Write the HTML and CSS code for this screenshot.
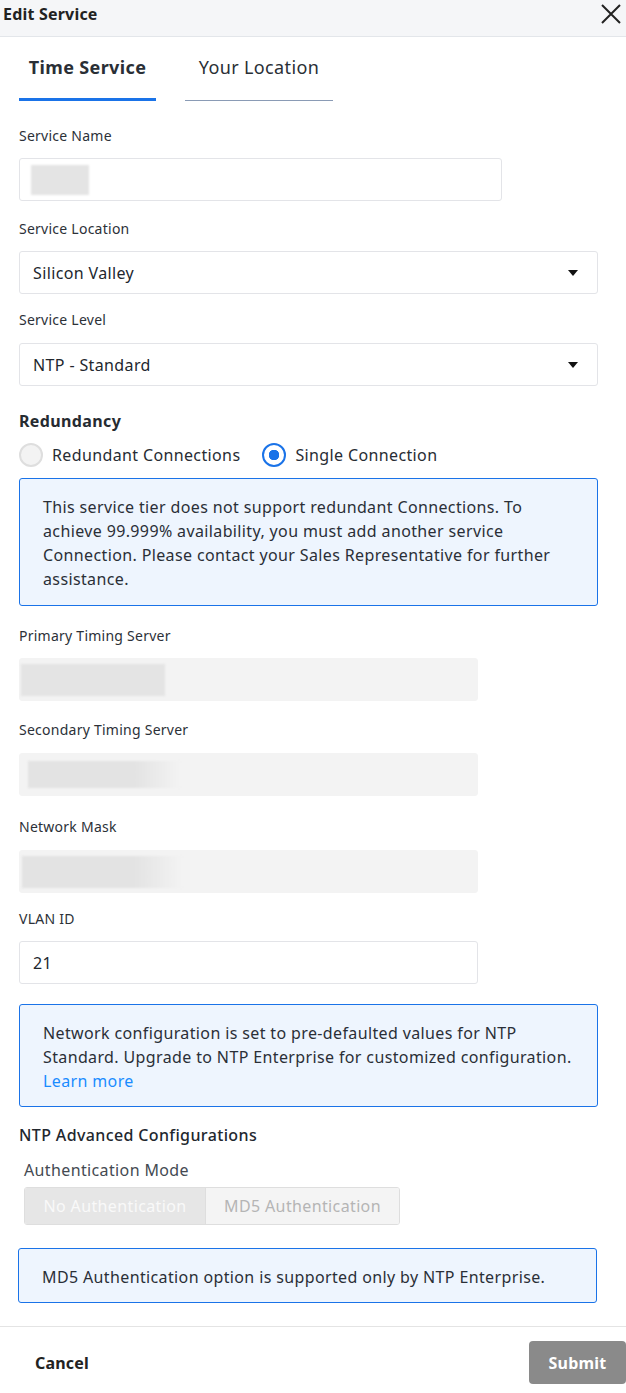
FILE: index.html
```html
<!DOCTYPE html>
<html>
<head>
<meta charset="utf-8">
<link rel="stylesheet" href="styles.css">
</head>
<body>
<div class="modal">
  <header class="modal-header">
    <h1 class="modal-title">Edit Service</h1>
    <button class="close-btn" aria-label="Close">
      <svg width="22" height="22" viewBox="0 0 22 22"><path d="M2 2 L20 20 M20 2 L2 20" stroke="#222" stroke-width="2" fill="none"/></svg>
    </button>
  </header>
  <div class="modal-body">
    <nav class="tabs">
      <div class="tab active">Time Service</div>
      <div class="tab">Your Location</div>
    </nav>

    <div class="field">
      <label class="label">Service Name</label>
      <div class="input w-medium"><span class="blur blur-name"></span></div>
    </div>

    <div class="field">
      <label class="label">Service Location</label>
      <div class="input select"><span>Silicon Valley</span><span class="caret"></span></div>
    </div>

    <div class="field f-level">
      <label class="label">Service Level</label>
      <div class="input select"><span>NTP - Standard</span><span class="caret"></span></div>
    </div>

    <div class="section">
      <h2 class="section-title">Redundancy</h2>
      <div class="radios">
        <div class="radio"><span class="radio-dot"></span>Redundant Connections</div>
        <div class="radio checked"><span class="radio-dot"></span>Single Connection</div>
      </div>
      <div class="info info-1">This service tier does not support redundant Connections. To achieve 99.999% availability, you must add another service Connection. Please contact your Sales Representative for further assistance.</div>
    </div>

    <div class="field f-primary">
      <label class="label">Primary Timing Server</label>
      <div class="input disabled w-small"><span class="blur blur-a"></span></div>
    </div>
    <div class="field f-secondary">
      <label class="label">Secondary Timing Server</label>
      <div class="input disabled w-small"><span class="blur blur-b"></span></div>
    </div>
    <div class="field f-mask">
      <label class="label">Network Mask</label>
      <div class="input disabled w-small"><span class="blur blur-c"></span></div>
    </div>
    <div class="field f-vlan">
      <label class="label">VLAN ID</label>
      <div class="input w-small"><span>21</span></div>
    </div>

    <div class="info info-2">Network configuration is set to pre-defaulted values for NTP Standard. Upgrade to NTP Enterprise for customized configuration. <a class="link" href="#">Learn more</a></div>

    <div class="advanced">
      <h2 class="adv-title">NTP Advanced Configurations</h2>
      <div class="auth">
        <div class="auth-label">Authentication Mode</div>
        <div class="segmented">
          <div class="seg seg-on">No Authentication</div>
          <div class="seg seg-off">MD5 Authentication</div>
        </div>
      </div>
      <div class="info info-3">MD5 Authentication option is supported only by NTP Enterprise.</div>
    </div>
  </div>
  <footer class="modal-footer">
    <button class="btn-cancel">Cancel</button>
    <button class="btn-submit">Submit</button>
  </footer>
</div>
</body>
</html>
```
FILE: styles.css
```css
* { box-sizing: border-box; }
html, body { margin: 0; padding: 0; background: #fff; }
body { font-family: "Noto Sans", "Open Sans", sans-serif; color: #242a33; width: 626px; letter-spacing: 0.37px; }

.modal-header {
  height: 37px;
  background: #f5f6f8;
  border-bottom: 1px solid #e3e6ea;
  display: flex;
  align-items: center;
  justify-content: space-between;
  padding: 0 4px 8px 3px;
}
.modal-title { margin: 0; font-size: 16px; font-weight: 700; color: #222; letter-spacing: 0.2px; }
.close-btn { background: none; border: 0; padding: 0; width: 22px; height: 22px; display: flex; }

.modal-body { padding: 0 28px 0 19px; }

.tabs { display: flex; gap: 29px; margin-bottom: 25px; }
.tab {
  height: 64px;
  padding-top: 18px;
  font-size: 18px;
  color: #2a2f36;
  border-bottom: 1px solid #8a9bb5;
  width: 148px;
  text-align: center;
}
.tab.active { font-weight: 700; border-bottom: 3px solid #1a73e8; width: 137px; }

.field { display: flex; flex-direction: column; }
.label { font-size: 14px; line-height: 20px; color: #2c3138; margin-bottom: 12px; letter-spacing: 0.25px; }
.input {
  height: 43px;
  border: 1px solid #e3e4e8;
  border-radius: 3px;
  background: #fff;
  display: flex;
  align-items: center;
  padding: 0 13px;
  font-size: 16px;
  color: #22272e;
  margin-bottom: 18px;
}
.w-medium { width: 483px; }
.w-small { width: 459px; }
.select { justify-content: space-between; padding-right: 19px; margin-bottom: 16px; }
.f-level .label { margin-bottom: 13px; }
.caret { width: 0; height: 0; border-left: 5px solid transparent; border-right: 5px solid transparent; border-top: 6px solid #111; }

.blur { display: block; height: 30px; background: #e4e4e4; filter: blur(1px); }
.blur-name { width: 58px; margin-left: -2px; }
.input.disabled { background: #f3f3f3; border-color: #f3f3f3; padding: 0; margin-bottom: 0; }
.blur-a { width: 144px; height: 32px; margin-left: 1px; }
.blur-b { width: 152px; height: 27px; margin-left: 8px; background: linear-gradient(90deg, #e3e3e3 70%, #f3f3f3); }
.blur-c { width: 160px; height: 32px; margin-left: 2px; background: linear-gradient(90deg, #e3e3e3 70%, #f3f3f3); }

.section { margin-top: 7px; }
.section-title { margin: 0; font-size: 16px; font-weight: 700; line-height: 24px; color: #262b31; }
.radios { display: flex; gap: 22px; margin-top: 10px; }
.radio { display: flex; align-items: center; gap: 9px; font-size: 16px; color: #272c33; line-height: 24px; }
.radio-dot { width: 24px; height: 24px; border-radius: 50%; border: 2px solid #dedede; background: #f3f3f3; display: block; }
.radio.checked .radio-dot { border: 2px solid #1a73e8; background: radial-gradient(circle, #1a73e8 0 5px, #fff 5.5px); }

.info {
  border: 1px solid #1a73e8;
  border-radius: 3px;
  background: #eef5fe;
  padding: 16px 20px 13px 23px;
  font-size: 16px;
  line-height: 24px;
  color: #2a2f37;
  width: 579px;
}
.info-1 { margin-top: 11px; padding-bottom: 14px; }
.f-primary { margin-top: 20px; }
.f-secondary { margin-top: 19px; }
.f-secondary .label { margin-bottom: 13px; }
.f-mask { margin-top: 21px; }
.f-mask .label { margin-bottom: 13px; }
.f-vlan { margin-top: 16px; }
.f-vlan .input { margin-bottom: 20px; }
.link { color: #1a8cff; text-decoration: none; }

.advanced { margin-top: 16px; }
.adv-title { margin: 0; font-size: 16px; font-weight: 500; line-height: 24px; color: #22272e; }
.auth { padding-left: 5px; margin-top: 13px; }
.auth-label { font-size: 16px; line-height: 20px; color: #444a52; }
.segmented { display: flex; margin-top: 7px; width: 376px; height: 38px; border: 1px solid #dedede; border-radius: 3px; overflow: hidden; }
.seg { display: flex; align-items: center; justify-content: center; font-size: 16px; }
.seg-on { width: 181px; background: #e6e6e6; color: #f9f9f9; border-right: 1px solid #dedede; }
.seg-off { flex: 1; background: #f4f4f4; color: #b5b5b5; }
.info-3 { margin-top: 23px; margin-left: -1px; }

.modal-footer {
  margin-top: 23px;
  border-top: 1px solid #e4e4e4;
  display: flex;
  justify-content: space-between;
  align-items: center;
  padding: 14px 0 9px 16px;
}
.btn-cancel { background: none; border: 0; font-family: inherit; font-size: 16px; font-weight: 700; color: #222; padding: 0 19px; height: 43px; letter-spacing: 0.2px; }
.btn-submit { background: #8a8a8a; border: 0; border-radius: 4px; color: #fff; font-family: inherit; font-size: 16px; font-weight: 700; height: 43px; width: 97px; letter-spacing: 0.2px; }
```
